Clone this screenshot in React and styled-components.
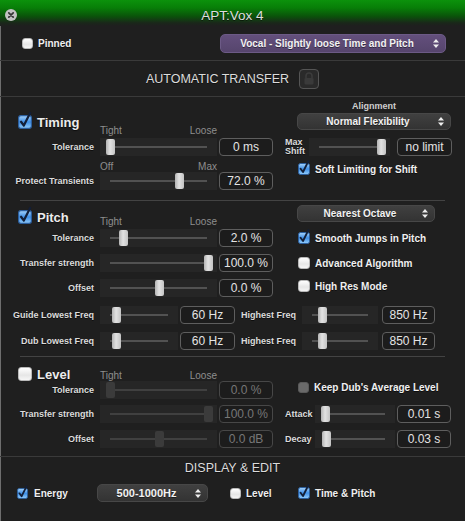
import React, { useId } from 'react';
import styled, { createGlobalStyle } from 'styled-components';

const GlobalStyle = createGlobalStyle`
  html, body {
    margin: 0;
    padding: 0;
    background: #1f1f1f;
  }
  body {
    font-family: "Liberation Sans", Arial, sans-serif;
  }
`;

const Window = styled.div`
  width: 465px;
  height: 521px;
  overflow: hidden;
  background: #1f1f1f;
  color: #e6e6e6;
`;

const TitleBar = styled.div`
  height: 26px;
  box-sizing: border-box;
  padding-top: 4px;
  display: grid;
  grid-template-columns: 1fr auto 1fr;
  align-items: center;
  background: linear-gradient(to bottom, #0c920c 0%, #087e08 30%, #0a540a 62%, #1a271a 88%, #1f1f1f 100%);
`;

const CloseButton = styled.div`
  padding-left: 5px;
  display: flex;
  svg { display: block; }
`;

const TitleText = styled.div`
  font-size: 13.5px;
  color: #dedede;
  text-shadow: 0 1px 0 rgba(0, 0, 0, 0.5);
`;

const Body = styled.div`
  height: 495px;
  box-shadow: inset 1px 0 0 #6e6e6e;
`;

const PinnedRow = styled.div`
  height: 34px;
  display: flex;
  align-items: center;
  padding-left: 22px;
  padding-right: 19px;
  border-bottom: 1px solid #3a3a3a;
`;

const PopUp = styled.div`
  flex: none;
  box-sizing: border-box;
  width: ${({ $width }) => $width}px;
  height: ${({ $height = 17 }) => $height}px;
  margin-left: ${({ $ml = 0 }) => ($ml === 'auto' ? 'auto' : `${$ml}px`)};
  margin-top: ${({ $mt = 0 }) => $mt}px;
  display: flex;
  align-items: center;
  border-radius: 5px;
  border: 1px solid ${({ $purple }) => ($purple ? '#6c5a86' : '#474747')};
  background: ${({ $purple }) =>
    $purple
      ? 'linear-gradient(to bottom, #634f7c, #56456d)'
      : 'linear-gradient(to bottom, #404040, #333333)'};
  color: #f2f2f2;
  font-weight: bold;
  font-size: ${({ $fs = 10 }) => $fs}px;
  text-shadow: 0 1px 0 rgba(0, 0, 0, 0.45);
`;

const PopUpText = styled.span`
  flex: 1;
  text-align: center;
  white-space: nowrap;
`;

const PopUpArrows = styled.svg`
  flex: none;
  margin-right: 6px;
`;

const CenterRow = styled.div`
  height: 35px;
  display: flex;
  align-items: center;
  justify-content: center;
  gap: 10px;
  border-bottom: 1px solid #3a3a3a;
`;

const SectionTitle = styled.div`
  font-size: 12.5px;
  color: #dcdcdc;
  text-shadow: 0 1px 0 rgba(0, 0, 0, 0.5);
  line-height: 12px;
`;

const LockButton = styled.div`
  width: 20px;
  height: 20px;
  box-sizing: border-box;
  border: 1px solid #555;
  border-radius: 4px;
  background: #2a2a2a;
  display: flex;
  align-items: center;
  justify-content: center;
  margin-left: ${({ $ml = 0 }) => $ml}px;
`;

const Divider = styled.div`
  height: 1px;
  margin: 0 ${({ $inset }) => ($inset ? 20 : 0)}px;
  background: ${({ $inset }) => ($inset ? '#434343' : '#3a3a3a')};
`;

const Section = styled.div`
  display: flex;
`;

const Column = styled.div`
  box-sizing: border-box;
  ${({ $width }) => ($width ? `width: ${$width}px; flex: none;` : 'flex: 1;')}
  padding-top: ${({ $pt = 0 }) => $pt}px;
  padding-bottom: ${({ $pb = 0 }) => $pb}px;
  display: flex;
  flex-direction: column;
`;

const HeadRow = styled.div`
  height: ${({ $h }) => $h}px;
  display: flex;
  align-items: flex-end;
`;

const HeadTitle = styled.div`
  align-self: flex-start;
  width: 100px;
  box-sizing: border-box;
  padding-left: 18px;
  margin-top: ${({ $mt = 0 }) => $mt}px;
  height: 14px;
  display: flex;
  align-items: center;
  gap: 5px;
  font-size: 13px;
  font-weight: bold;
  color: #ececec;
  text-shadow: 0 1px 1px rgba(0, 0, 0, 0.6);
`;

const Scale = styled.div`
  width: 117px;
  display: flex;
  justify-content: space-between;
  font-size: 10px;
  line-height: 10px;
  color: #8e8e8e;
`;

const ScaleRow = styled.div`
  height: 16px;
  display: flex;
  align-items: flex-end;
  padding-left: 100px;
`;

const ControlRow = styled.div`
  height: 18px;
  display: flex;
  align-items: center;
  margin-top: ${({ $mt = 0 }) => $mt}px;
`;

const Label = styled.div`
  flex: none;
  width: ${({ $width = 94 }) => $width}px;
  margin-right: ${({ $mr = 6 }) => $mr}px;
  text-align: ${({ $left }) => ($left ? 'left' : 'right')};
  font-size: 9px;
  font-weight: bold;
  color: #dcdcdc;
  white-space: nowrap;
  text-shadow: 0 1px 0 rgba(0, 0, 0, 0.6);
`;

const ShiftLabel = styled(Label)`
  line-height: 9px;
  white-space: normal;
`;

const Caption = styled.div`
  width: 154px;
  margin-left: 12px;
  text-align: center;
  font-size: 9px;
  font-weight: bold;
  line-height: 10px;
  color: #cfcfcf;
`;

const SliderBox = styled.div`
  position: relative;
  flex: none;
  width: ${({ $width }) => $width}px;
  height: 18px;
  background: #262626;
`;

const Track = styled.div`
  position: absolute;
  left: 10px;
  right: 10px;
  top: 8px;
  height: 2px;
  background: ${({ $disabled }) => ($disabled ? '#404040' : '#525252')};
`;

const Thumb = styled.div`
  position: absolute;
  top: 1px;
  width: 9px;
  height: 16px;
  border-radius: 2px;
  background: ${({ $disabled }) =>
    $disabled ? '#3b3b3b' : 'linear-gradient(to right, #b4b4b4, #e2e2e2 45%, #c4c4c4)'};
`;

const ValueBox = styled.div`
  flex: none;
  box-sizing: border-box;
  width: ${({ $width = 54 }) => $width}px;
  height: 18px;
  margin-left: ${({ $ml = 2 }) => $ml}px;
  border: 1px solid ${({ $disabled }) => ($disabled ? '#474747' : '#5e5e5e')};
  border-radius: 4px;
  background: #1c1c1c;
  display: flex;
  align-items: center;
  justify-content: center;
  font-size: 12px;
  color: ${({ $disabled }) => ($disabled ? '#777' : '#e4e4e4')};
  white-space: nowrap;
`;

const CheckRow = styled.div`
  height: 18px;
  display: flex;
  align-items: center;
  gap: ${({ $gap = 5 }) => $gap}px;
  margin-left: ${({ $ml = 0 }) => $ml}px;
  margin-top: ${({ $mt = 0 }) => $mt}px;
  ${({ $width }) => ($width ? `width: ${$width}px; flex: none;` : '')}
  font-size: 10px;
  font-weight: bold;
  color: #f0f0f0;
  white-space: nowrap;
  text-shadow: 0 1px 0 rgba(0, 0, 0, 0.6);
`;

const PlainBox = styled.span`
  flex: none;
  box-sizing: border-box;
  width: ${({ $size }) => $size}px;
  height: ${({ $size }) => $size}px;
  border-radius: 3px;
  border: 1px solid ${({ $disabled }) => ($disabled ? '#5a5a5a' : '#b9b9b9')};
  background: ${({ $disabled }) =>
    $disabled ? '#6a6a6a' : 'linear-gradient(to bottom, #ffffff, #e6e6e6 60%, #f6f6f6)'};
`;

const CheckWrap = styled.span`
  flex: none;
  display: block;
  width: ${({ $size }) => $size}px;
  height: ${({ $size }) => $size}px;
  svg { display: block; overflow: visible; }
`;

const FreqRows = styled.div`
  padding-top: 9px;
  padding-bottom: 6px;
`;

const DisplaySection = styled.div`
  padding-top: 5px;
  display: flex;
  flex-direction: column;
  align-items: center;
`;

const DisplayRow = styled.div`
  align-self: stretch;
  margin-top: 10px;
  padding-left: 17px;
  display: flex;
  align-items: center;
`;

function Checkbox({ checked, size = 12, disabled }) {
  const raw = useId();
  const id = 'cb' + raw.replace(/[^a-zA-Z0-9]/g, '');
  if (!checked) return <PlainBox $size={size} $disabled={disabled} />;
  return (
    <CheckWrap $size={size}>
      <svg width={size} height={size} viewBox="0 0 12 12">
        <defs>
          <linearGradient id={id} x1="0" y1="0" x2="0" y2="1">
            <stop offset="0" stopColor="#a7d4fb" />
            <stop offset="0.5" stopColor="#3f8fe6" />
            <stop offset="1" stopColor="#93cdfb" />
          </linearGradient>
        </defs>
        <rect x="0.5" y="0.5" width="11" height="11" rx="2" fill={`url(#${id})`} stroke="#2c5f9e" />
        <path
          d="M2.6 5.8 L5 9 L10.4 -1.8"
          fill="none"
          stroke="#131f38"
          strokeWidth="1.9"
          strokeLinecap="round"
          strokeLinejoin="round"
        />
      </svg>
    </CheckWrap>
  );
}

function Slider({ width, value, disabled }) {
  const left = 6 + value * (width - 19);
  return (
    <SliderBox $width={width}>
      <Track $disabled={disabled} />
      <Thumb $disabled={disabled} style={{ left }} />
    </SliderBox>
  );
}

function Select({ children, ...rest }) {
  return (
    <PopUp {...rest}>
      <PopUpText>{children}</PopUpText>
      <PopUpArrows width="6" height="9" viewBox="0 0 6 9">
        <path d="M0 3.6 L3 0 L6 3.6 Z M0 5.4 L3 9 L6 5.4 Z" fill="#eeeeee" />
      </PopUpArrows>
    </PopUp>
  );
}

export default function App() {
  return (
    <>
      <GlobalStyle />
      <Window>
        <TitleBar>
          <CloseButton>
            <svg width="12" height="12" viewBox="0 0 12 12">
              <circle cx="6" cy="6" r="6" fill="#c2c2c2" />
              <path d="M3.8 3.8 L8.2 8.2 M8.2 3.8 L3.8 8.2" stroke="#333" strokeWidth="1.7" strokeLinecap="round" />
            </svg>
          </CloseButton>
          <TitleText>APT:Vox 4</TitleText>
          <div />
        </TitleBar>

        <Body>
          <PinnedRow>
            <CheckRow>
              <Checkbox size={11} />
              Pinned
            </CheckRow>
            <Select $purple $width={226} $height={19} $ml="auto">
              Vocal - Slightly loose Time and Pitch
            </Select>
          </PinnedRow>

          <CenterRow>
            <SectionTitle>AUTOMATIC TRANSFER</SectionTitle>
            <LockButton>
              <svg width="12" height="13" viewBox="0 0 12 13">
                <path d="M3 6 V4 a3 3 0 0 1 6 0 V6" fill="none" stroke="#3c3c3c" strokeWidth="1.5" />
                <rect x="1.5" y="6" width="9" height="6.5" rx="1" fill="#3a3a3a" />
              </svg>
            </LockButton>
          </CenterRow>

          {/* Timing */}
          <Section>
            <Column $width={285} $pt={16} $pb={10}>
              <HeadRow $h={23}>
                <HeadTitle $mt={2}>
                  <Checkbox checked size={14} />
                  Timing
                </HeadTitle>
                <Scale>
                  <span>Tight</span>
                  <span>Loose</span>
                </Scale>
              </HeadRow>
              <ControlRow $mt={2}>
                <Label>Tolerance</Label>
                <Slider width={117} value={0} />
                <ValueBox>0 ms</ValueBox>
              </ControlRow>
              <ScaleRow>
                <Scale>
                  <span>Off</span>
                  <span>Max</span>
                </Scale>
              </ScaleRow>
              <ControlRow>
                <Label>Protect Transients</Label>
                <Slider width={117} value={0.7} />
                <ValueBox>72.0 %</ValueBox>
              </ControlRow>
            </Column>
            <Column $pt={4}>
              <Caption>Alignment</Caption>
              <Select $width={154} $ml={12} $mt={2}>
                Normal Flexibility
              </Select>
              <ControlRow $mt={8}>
                <ShiftLabel $width={22} $mr={2} $left>
                  Max
                  <br />
                  Shift
                </ShiftLabel>
                <Slider width={81} value={1} />
                <ValueBox $ml={7} $width={55}>
                  no limit
                </ValueBox>
              </ControlRow>
              <CheckRow $ml={13} $mt={4}>
                <Checkbox checked size={12} />
                Soft Limiting for Shift
              </CheckRow>
            </Column>
          </Section>

          <Divider $inset />

          {/* Pitch */}
          <Section>
            <Column $width={285} $pt={8}>
              <HeadRow $h={18}>
                <HeadTitle $mt={1}>
                  <Checkbox checked size={14} />
                  Pitch
                </HeadTitle>
                <Scale>
                  <span>Tight</span>
                  <span>Loose</span>
                </Scale>
              </HeadRow>
              <ControlRow $mt={2}>
                <Label>Tolerance</Label>
                <Slider width={117} value={0.135} />
                <ValueBox>2.0 %</ValueBox>
              </ControlRow>
              <ControlRow $mt={7}>
                <Label>Transfer strength</Label>
                <Slider width={117} value={1} />
                <ValueBox>100.0 %</ValueBox>
              </ControlRow>
              <ControlRow $mt={7}>
                <Label>Offset</Label>
                <Slider width={117} value={0.5} />
                <ValueBox>0.0 %</ValueBox>
              </ControlRow>
            </Column>
            <Column $pt={4}>
              <Select $width={138} $ml={12}>
                Nearest Octave
              </Select>
              <CheckRow $ml={13} $mt={7}>
                <Checkbox checked size={12} />
                Smooth Jumps in Pitch
              </CheckRow>
              <CheckRow $ml={13} $mt={7}>
                <Checkbox size={12} />
                Advanced Algorithm
              </CheckRow>
              <CheckRow $ml={13} $mt={5}>
                <Checkbox size={12} />
                High Res Mode
              </CheckRow>
            </Column>
          </Section>

          <FreqRows>
            <ControlRow>
              <Label>Guide Lowest Freq</Label>
              <Slider width={78} value={0.095} />
              <ValueBox $width={55}>60 Hz</ValueBox>
              <Label $width={61}>Highest Freq</Label>
              <Slider width={76} value={0.18} />
              <ValueBox $ml={4} $width={53}>
                850 Hz
              </ValueBox>
            </ControlRow>
            <ControlRow $mt={8}>
              <Label>Dub Lowest Freq</Label>
              <Slider width={78} value={0.095} />
              <ValueBox $width={55}>60 Hz</ValueBox>
              <Label $width={61}>Highest Freq</Label>
              <Slider width={76} value={0.18} />
              <ValueBox $ml={4} $width={53}>
                850 Hz
              </ValueBox>
            </ControlRow>
          </FreqRows>

          <Divider $inset />

          {/* Level */}
          <Section>
            <Column $width={285} $pt={9} $pb={8}>
              <HeadRow $h={15}>
                <HeadTitle $mt={1}>
                  <Checkbox size={14} />
                  Level
                </HeadTitle>
                <Scale>
                  <span>Tight</span>
                  <span>Loose</span>
                </Scale>
              </HeadRow>
              <ControlRow>
                <Label>Tolerance</Label>
                <Slider width={117} value={0} disabled />
                <ValueBox $disabled>0.0 %</ValueBox>
              </ControlRow>
              <ControlRow $mt={6}>
                <Label>Transfer strength</Label>
                <Slider width={117} value={1} disabled />
                <ValueBox $disabled>100.0 %</ValueBox>
              </ControlRow>
              <ControlRow $mt={7}>
                <Label>Offset</Label>
                <Slider width={117} value={0.5} disabled />
                <ValueBox $disabled>0.0 dB</ValueBox>
              </ControlRow>
            </Column>
            <Column $pt={21}>
              <CheckRow $ml={13}>
                <Checkbox size={11} disabled />
                Keep Dub's Average Level
              </CheckRow>
              <ControlRow $mt={9}>
                <Label $width={28} $mr={2} $left>
                  Attack
                </Label>
                <Slider width={80} value={0} />
                <ValueBox>0.01 s</ValueBox>
              </ControlRow>
              <ControlRow $mt={7}>
                <Label $width={28} $mr={2} $left>
                  Decay
                </Label>
                <Slider width={80} value={0.02} />
                <ValueBox>0.03 s</ValueBox>
              </ControlRow>
            </Column>
          </Section>

          <Divider />

          <DisplaySection>
            <SectionTitle>DISPLAY &amp; EDIT</SectionTitle>
            <DisplayRow>
              <CheckRow $width={80} $gap={6}>
                <Checkbox checked size={11} />
                Energy
              </CheckRow>
              <Select $width={111} $height={18} $fs={11}>
                500-1000Hz
              </Select>
              <CheckRow $width={68} $ml={22} $gap={5}>
                <Checkbox size={11} />
                Level
              </CheckRow>
              <CheckRow $gap={5}>
                <Checkbox checked size={12} />
                Time &amp; Pitch
              </CheckRow>
            </DisplayRow>
          </DisplaySection>
        </Body>
      </Window>
    </>
  );
}
